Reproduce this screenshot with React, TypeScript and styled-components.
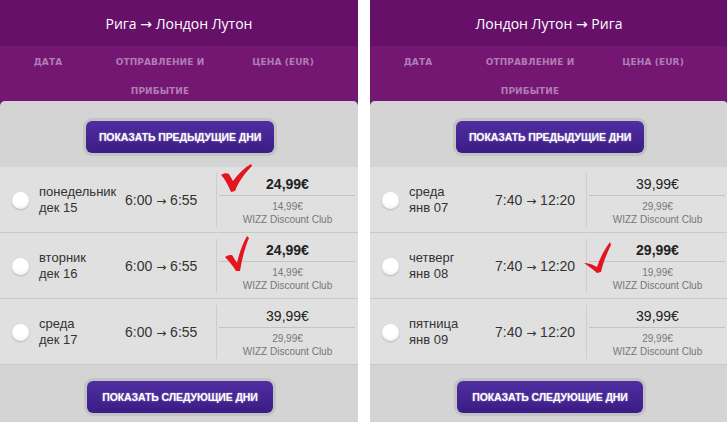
import React from 'react'
import styled, { createGlobalStyle } from 'styled-components'

const GlobalStyle = createGlobalStyle`
  body {
    margin: 0;
    background: #ffffff;
    overflow: hidden;
    font-family: "Liberation Sans", Arial, sans-serif;
  }
`

type CheckKind = 'wide' | 'tall' | 'low'

type Flight = {
  day: string
  date: string
  time: string
  price: string
  club: string
  best?: boolean
  check?: CheckKind
}

type Route = {
  title: string
  flights: Flight[]
}

const routes: Route[] = [
  {
    title: 'Рига → Лондон Лутон',
    flights: [
      { day: 'понедельник', date: 'дек 15', time: '6:00 → 6:55', price: '24,99€', club: '14,99€', best: true, check: 'wide' },
      { day: 'вторник', date: 'дек 16', time: '6:00 → 6:55', price: '24,99€', club: '14,99€', best: true, check: 'tall' },
      { day: 'среда', date: 'дек 17', time: '6:00 → 6:55', price: '39,99€', club: '29,99€' },
    ],
  },
  {
    title: 'Лондон Лутон → Рига',
    flights: [
      { day: 'среда', date: 'янв 07', time: '7:40 → 12:20', price: '39,99€', club: '29,99€' },
      { day: 'четверг', date: 'янв 08', time: '7:40 → 12:20', price: '29,99€', club: '19,99€', best: true, check: 'low' },
      { day: 'пятница', date: 'янв 09', time: '7:40 → 12:20', price: '39,99€', club: '29,99€' },
    ],
  },
]

// hand drawn red ticks, one shape per kind
const ticks: Record<CheckKind, { w: number; h: number; x: number; y: number; d: string }> = {
  wide: {
    w: 33, h: 29, x: 3, y: -3,
    d: 'M1,11 C4,9 7,9 9,10 L13,17 C18,10 24,4 31,0 L32,2 C25,9 19,17 15,27 L11,28 C8,21 5,15 1,11 Z',
  },
  tall: {
    w: 28, h: 38, x: 6, y: 2,
    d: 'M2,22 C5,20 7,20 9,20 L14,28 C16,19 19,10 24,1 L26,3 C22,12 19,24 17,36 L13,36 C10,31 6,26 2,22 Z',
  },
  low: {
    w: 30, h: 33, x: -4, y: 8,
    d: 'M1,22 C5,22 8,23 10,24 L14,26 C17,17 21,9 27,1 L28,4 C24,12 20,22 18,31 L14,32 C10,28 5,25 1,22 Z',
  },
}

const Page = styled.div`
  display: flex;
  gap: 12px;
  width: 728px;
`

const Panel = styled.section`
  width: 358px;
  flex-shrink: 0;
  background: #731773;
`

const Title = styled.h2`
  margin: 0;
  height: 46px;
  display: flex;
  align-items: center;
  justify-content: center;
  background: #661069;
  color: #ffffff;
  font-family: "Open Sans", "DejaVu Sans", sans-serif;
  font-weight: 400;
  font-size: 14px;
`

const Columns = styled.div`
  height: 55px;
  padding-top: 2px;
  box-sizing: border-box;
  display: grid;
  grid-template-columns: 96px 128px 1fr;
`

const ColumnLabel = styled.div<{ $pad?: number }>`
  text-align: center;
  padding-right: ${p => p.$pad || 0}px;
  color: #b07db4;
  font-family: "DejaVu Sans", Verdana, sans-serif;
  font-weight: 700;
  font-size: 9px;
  letter-spacing: 0.1px;
  line-height: 29px;
`

const Body = styled.div`
  background: #d4d4d4;
  border-radius: 5px 5px 0 0;
`

const ButtonBar = styled.div<{ $top: number; $bottom: number }>`
  display: flex;
  justify-content: center;
  padding: ${p => p.$top}px 0 ${p => p.$bottom}px 2px;
`

const DaysButton = styled.button<{ $w: number }>`
  width: ${p => p.$w}px;
  height: 32px;
  border: none;
  border-radius: 6px;
  background: linear-gradient(#4f2ea2, #3b1c84);
  box-shadow: 0 0 0 3px #c3c3c3;
  color: #ffffff;
  font-family: "Liberation Sans", Arial, sans-serif;
  font-weight: 700;
  font-size: 10.5px;
  text-shadow: 0 0 2px rgba(255, 255, 255, 0.5);
  letter-spacing: -0.1px;
  padding: 0;
`

const List = styled.div`
  background: #e0e0e0;
`

const Row = styled.div`
  height: 66px;
  box-sizing: border-box;
  border-bottom: 1px solid #c9c9c9;
  display: grid;
  grid-template-columns: 39px 86px 91px 1fr;
  align-items: center;
`

const Radio = styled.span`
  justify-self: center;
  margin-left: 2px;
  width: 17px;
  height: 17px;
  border-radius: 50%;
  background: radial-gradient(circle at 50% 35%, #ffffff 50%, #e6e6e6 100%);
  box-shadow: 0 1px 2px rgba(0, 0, 0, 0.2);
`

const DateText = styled.div`
  color: #333333;
  font-size: 13px;
  line-height: 16px;
`

const Time = styled.div`
  color: #333333;
  font-size: 14px;
  white-space: nowrap;
`

const Arrow = styled.span`
  font-family: "DejaVu Sans", sans-serif;
  font-size: 12px;
`

const PriceCell = styled.div`
  position: relative;
  align-self: stretch;
  margin: 6px 0;
  border-left: 1px solid #cdcdcd;
  display: flex;
  flex-direction: column;
  align-items: center;
  padding-top: 3px;
`

const Price = styled.div<{ $best?: boolean }>`
  color: #222222;
  font-size: 14px;
  font-weight: ${p => (p.$best ? 700 : 400)};
  line-height: 17px;
`

const Rule = styled.div`
  align-self: stretch;
  margin: 2px 3px 0 2px;
  border-top: 1px solid #c4c4c4;
`

const ClubPrice = styled.div`
  margin-top: 4px;
  color: #777777;
  font-size: 10px;
  line-height: 13px;
`

const ClubName = styled.div`
  color: #777777;
  font-size: 10px;
  line-height: 14px;
`

const Tick = styled.svg<{ $x: number; $y: number }>`
  position: absolute;
  left: ${p => p.$x}px;
  top: ${p => p.$y - 6}px;
  overflow: visible;
`

function Check({ kind }: { kind: CheckKind }) {
  const t = ticks[kind]
  return (
    <Tick $x={t.x} $y={t.y} width={t.w} height={t.h} viewBox={`0 0 ${t.w} ${t.h}`}>
      <path d={t.d} fill="#e3161f" />
    </Tick>
  )
}

function FlightRow({ f }: { f: Flight }) {
  const [from, to] = f.time.split(' → ')
  return (
    <Row>
      <Radio />
      <DateText>
        {f.day}
        <br />
        {f.date}
      </DateText>
      <Time>
        {from} <Arrow>→</Arrow> {to}
      </Time>
      <PriceCell>
        {f.check && <Check kind={f.check} />}
        <Price $best={f.best}>{f.price}</Price>
        <Rule />
        <ClubPrice>{f.club}</ClubPrice>
        <ClubName>WIZZ Discount Club</ClubName>
      </PriceCell>
    </Row>
  )
}

function RoutePanel({ route }: { route: Route }) {
  return (
    <Panel>
      <Title>{route.title}</Title>
      <Columns>
        <ColumnLabel>ДАТА</ColumnLabel>
        <ColumnLabel>
          ОТПРАВЛЕНИЕ И
          <br />
          ПРИБЫТИЕ
        </ColumnLabel>
        <ColumnLabel $pad={16}>ЦЕНА (EUR)</ColumnLabel>
      </Columns>
      <Body>
        <ButtonBar $top={20} $bottom={14}>
          <DaysButton $w={188}>ПОКАЗАТЬ ПРЕДЫДУЩИЕ ДНИ</DaysButton>
        </ButtonBar>
        <List>
          {route.flights.map(f => (
            <FlightRow key={f.date} f={f} />
          ))}
        </List>
        <ButtonBar $top={16} $bottom={12}>
          <DaysButton $w={186}>ПОКАЗАТЬ СЛЕДУЮЩИЕ ДНИ</DaysButton>
        </ButtonBar>
      </Body>
    </Panel>
  )
}

export default function App() {
  return (
    <>
      <GlobalStyle />
      <Page>
        {routes.map(r => (
          <RoutePanel key={r.title} route={r} />
        ))}
      </Page>
    </>
  )
}
